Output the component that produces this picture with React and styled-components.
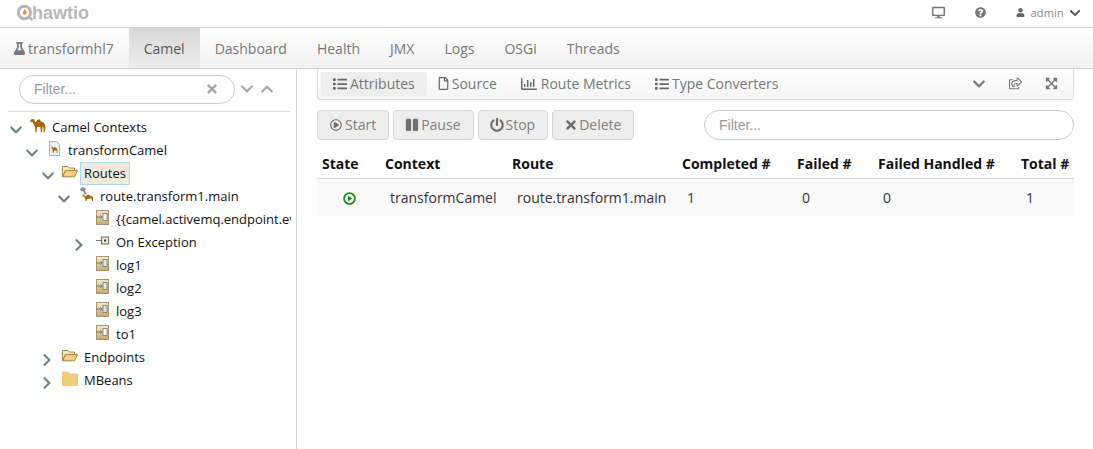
import React from "react";
import styled, { createGlobalStyle } from "styled-components";
import {
  FaChevronDown,
  FaChevronRight,
  FaChevronUp,
  FaDesktop,
  FaExpandArrowsAlt,
  FaFlask,
  FaList,
  FaPause,
  FaPowerOff,
  FaQuestionCircle,
  FaRegChartBar,
  FaRegFile,
  FaRegPlayCircle,
  FaRegShareSquare,
  FaTimes,
  FaUser,
} from "react-icons/fa";

const GlobalStyle = createGlobalStyle`
  html, body {
    margin: 0;
    height: 100%;
    overflow: hidden;
    background: #fff;
    font-family: "Open Sans", "Liberation Sans", sans-serif;
  }
  #root { height: 100%; }
  * { box-sizing: border-box; }
`;

const CamelIcon = () => (
  <svg width="17" height="15" viewBox="0 0 17 15">
    <path
      fill="#a8660f"
      d="M0 2.4 L2 .6 L4.6 .8 L5 3 L6 4 L8 1.4 L10 .8 L11.6 3 L14 4 L16 6.4 L16.4 10 L15.6 14.6 L14.4 14.6 L14.4 10 L13.4 8.6 L12.8 14.6 L11.6 14.6 L11 9 L7.4 9 L7 14.6 L5.8 14.6 L5.2 9 L4 6.6 L3 4 L.8 3.8 Z"
    />
  </svg>
);

const ContextIcon = () => (
  <svg width="13" height="15" viewBox="0 0 13 15">
    <path fill="#eef1f6" stroke="#a9b1c0" d="M1.5 .5 H8.5 L11.5 3.5 V14.5 H1.5 Z" />
    <path fill="#a8660f" d="M3 6 L4.5 5.5 L5 7 L7 6 L9 7.5 L9.6 12 L8.8 12 L8.4 9.5 L6 9.5 L5.6 12 L4.8 12 L4.6 8.5 Z" />
  </svg>
);

const RouteIcon = () => (
  <svg width="15" height="15" viewBox="0 0 15 15">
    <path fill="#8e8e8e" d="M1 2 L4 0 L7 1.5 L6 3.5 L7.5 7 L6 8 L4 4 L2 4.5 Z" />
    <path fill="#a8660f" d="M3 8 L5 7.5 L6 9.5 L9 7.5 L12 9 L14 10 L14 14 L13 14 L12.4 11.5 L8 12 L7.6 14 L6.6 14 L6 11 Z" />
  </svg>
);

const FolderOpenIcon = () => (
  <svg width="16" height="13" viewBox="0 0 16 13">
    <path fill="#f5e6c0" stroke="#a98545" d="M.5 11.5 V1.5 H6 L7.5 3 H12.5 V5.5 H4 Z" />
    <path fill="#f1cf83" stroke="#a98545" d="M.5 11.8 L3.5 5.5 H15.5 L12.5 11.8 Z" />
  </svg>
);

const FolderIcon = () => (
  <svg width="16" height="15" viewBox="0 0 16 15">
    <path fill="#efcc7c" d="M1 .5 H6 L8 2.5 H14.5 Q16 2.5 16 4 V13.5 Q16 15 14.5 15 H1.5 Q0 15 0 13.5 V1.5 Q0 .5 1 .5 Z" />
  </svg>
);

const NodeIcon = ({ dark }) => (
  <svg width="13" height="15" viewBox="0 0 13 15">
    <defs>
      <linearGradient id="nodeFill" x1="0" y1="0" x2="0" y2="1">
        <stop offset="0" stopColor="#f3ead0" />
        <stop offset="1" stopColor="#c2a970" />
      </linearGradient>
    </defs>
    <rect x=".5" y=".5" width="12" height="14" fill="url(#nodeFill)" stroke="#a89668" />
    <rect x="7" y="3.5" width="4" height="7" fill={dark ? "#fff" : "#dbe3ea"} stroke="#777" strokeWidth=".8" />
    <path d="M0 7 H6 M4.4 5.4 L6 7 L4.4 8.6" fill="none" stroke="#777" />
  </svg>
);

const ExceptionIcon = () => (
  <svg width="15" height="9" viewBox="0 0 15 9">
    <path d="M1 4.5 H6" stroke="#777" />
    <rect x="6.5" y="1" width="7" height="7" fill="#f0e8cc" stroke="#6a6a6a" />
    <rect x="9" y="3.5" width="2" height="2" fill="#333" />
  </svg>
);

const LogoMark = () => (
  <svg width="18" height="18" viewBox="0 0 18 18">
    <circle cx="8.5" cy="8.5" r="6.2" fill="none" stroke="#b5b5b5" strokeWidth="3" />
    <path d="M12 12 L16.5 16" stroke="#b5b5b5" strokeWidth="3" />
    <path fill="#ef8f42" d="M8.6 4.8 C10.8 7 11 8.4 10.4 9.8 C9.8 11 7.6 11.2 6.8 10 C6 8.8 7 8 7.6 7.4 C8.2 6.8 8.8 6 8.6 4.8 Z" />
  </svg>
);

const RunningIcon = () => (
  <svg width="13" height="13" viewBox="0 0 13 13">
    <circle cx="6.5" cy="6.5" r="5.4" fill="none" stroke="#1a8a1a" strokeWidth="1.8" />
    <path fill="#1a8a1a" d="M5 3.7 L9.4 6.5 L5 9.3 Z" />
  </svg>
);

const treeRows = [
  { level: 0, open: true, icon: <CamelIcon />, label: "Camel Contexts" },
  { level: 1, open: true, icon: <ContextIcon />, label: "transformCamel" },
  { level: 2, open: true, icon: <FolderOpenIcon />, label: "Routes", selected: true },
  { level: 3, open: true, icon: <RouteIcon />, label: "route.transform1.main" },
  { level: 4, icon: <NodeIcon dark />, label: "{{camel.activemq.endpoint.everything}}" },
  { level: 4, open: false, icon: <ExceptionIcon />, label: "On Exception" },
  { level: 4, icon: <NodeIcon />, label: "log1" },
  { level: 4, icon: <NodeIcon />, label: "log2" },
  { level: 4, icon: <NodeIcon />, label: "log3" },
  { level: 4, icon: <NodeIcon dark />, label: "to1" },
  { level: 2, open: false, icon: <FolderOpenIcon />, label: "Endpoints" },
  { level: 2, open: false, icon: <FolderIcon />, label: "MBeans" },
];

const navItems = ["Dashboard", "Health", "JMX", "Logs", "OSGi", "Threads"];

const columns = [
  { title: "State", width: 63 },
  { title: "Context", width: 127 },
  { title: "Route", width: 170 },
  { title: "Completed #", width: 115 },
  { title: "Failed #", width: 81 },
  { title: "Failed Handled #", width: 143 },
  { title: "Total #", width: 58 },
];

export default function App() {
  return (
    <>
      <GlobalStyle />
      <Page>
        <TopBar>
          <Logo>
            <LogoMark />
            <LogoText>hawtio</LogoText>
          </Logo>
          <TopActions>
            <FaDesktop size={13} />
            <FaQuestionCircle size={11} />
            <UserMenu>
              <FaUser size={9} />
              <span>admin</span>
              <FaChevronDown size={12} color="#555" />
            </UserMenu>
          </TopActions>
        </TopBar>

        <Nav>
          <NavItem>
            <FaFlask size={13} />
            transformhl7
          </NavItem>
          <NavItem $active>Camel</NavItem>
          {navItems.map((item) => (
            <NavItem key={item}>{item}</NavItem>
          ))}
        </Nav>

        <Main>
          <Sidebar>
            <FilterRow>
              <SideFilter>
                <FilterText>Filter...</FilterText>
                <ClearIcon size={14} />
              </SideFilter>
              <FaChevronDown size={14} color="#a9a9a9" />
              <FaChevronUp size={14} color="#a9a9a9" />
            </FilterRow>
            <Tree>
              {treeRows.map((row) => (
                <TreeRow key={row.label} $level={row.level}>
                  <Toggle $closed={row.open === false}>
                    {row.open === true && <FaChevronDown size={14} />}
                    {row.open === false && <FaChevronRight size={14} />}
                  </Toggle>
                  <TreeIcon>{row.icon}</TreeIcon>
                  <TreeLabel $selected={row.selected}>{row.label}</TreeLabel>
                </TreeRow>
              ))}
            </Tree>
          </Sidebar>

          <Content>
            <Toolbar>
              <Tab $active>
                <FaList size={14} />
                Attributes
              </Tab>
              <Tab>
                <FileIcon size={13} />
                Source
              </Tab>
              <Tab $wide>
                <FaRegChartBar size={16} />
                Route Metrics
              </Tab>
              <Tab>
                <FaList size={14} />
                Type Converters
              </Tab>
              <ToolbarIcons>
                <FaChevronDown size={14} />
                <FaRegShareSquare size={13} />
                <FaExpandArrowsAlt size={13} />
              </ToolbarIcons>
            </Toolbar>

            <Actions>
              <ActionButton>
                <FaRegPlayCircle size={12} />
                Start
              </ActionButton>
              <ActionButton>
                <WideIcon as={FaPause} size={14} />
                Pause
              </ActionButton>
              <ActionButton>
                <WideIcon as={FaPowerOff} size={14} />
                Stop
              </ActionButton>
              <ActionButton>
                <DeleteIcon size={14} />
                Delete
              </ActionButton>
              <ContentFilter>Filter...</ContentFilter>
            </Actions>

            <Table>
              <colgroup>
                {columns.map((col) => (
                  <col key={col.title} width={col.width} />
                ))}
              </colgroup>
              <thead>
                <tr>
                  {columns.map((col) => (
                    <Th key={col.title}>{col.title}</Th>
                  ))}
                </tr>
              </thead>
              <tbody>
                <Row>
                  <StateCell>
                    <RunningIcon />
                  </StateCell>
                  <Td>transformCamel</Td>
                  <Td>route.transform1.main</Td>
                  <Td>1</Td>
                  <Td>0</Td>
                  <Td>0</Td>
                  <Td>1</Td>
                </Row>
              </tbody>
            </Table>
          </Content>
        </Main>
      </Page>
    </>
  );
}

const Page = styled.div`
  height: 100%;
  display: flex;
  flex-direction: column;
`;

const TopBar = styled.div`
  height: 28px;
  flex: none;
  display: flex;
  align-items: center;
  justify-content: space-between;
  padding: 0 12px 2px 16px;
  background: #fff;
  border-bottom: 1px solid #d4d4d4;
`;

const Logo = styled.div`
  display: flex;
  align-items: center;
`;

const LogoText = styled.span`
  font-family: "Liberation Sans", Arial, sans-serif;
  font-weight: bold;
  font-size: 18px;
  line-height: 18px;
  color: #b8b8b8;
  margin-left: -2px;
`;

const TopActions = styled.div`
  display: flex;
  align-items: center;
  gap: 30px;
  color: #777;
`;

const UserMenu = styled.div`
  display: flex;
  align-items: center;
  gap: 5px;
  font-size: 11px;
  letter-spacing: 0.2px;
  color: #888;

  svg:first-child {
    color: #666;
  }
`;

const Nav = styled.div`
  height: 41px;
  flex: none;
  display: flex;
  background: linear-gradient(#fff, #f1f1f1);
  border-bottom: 1px solid #d4d4d4;
`;

const NavItem = styled.div`
  display: flex;
  align-items: center;
  gap: 2px;
  padding: 0 15px;
  font-size: 14px;
  color: ${(p) => (p.$active ? "#555" : "#777")};
  background: ${(p) => (p.$active ? "linear-gradient(#d8d8d8, #ececec)" : "none")};

  &:first-child {
    padding-left: 13px;
  }
`;

const Main = styled.div`
  flex: 1;
  min-height: 0;
  display: flex;
`;

const Sidebar = styled.div`
  width: 297px;
  flex: none;
  border-right: 1px solid #d4d4d4;
`;

const FilterRow = styled.div`
  height: 43px;
  margin: 0 6px 0 8px;
  padding: 0 0 2px 11px;
  display: flex;
  align-items: center;
  gap: 5px;
  border-bottom: 1px solid #ddd;

  svg + svg {
    margin-left: 1px;
  }
`;

const SideFilter = styled.div`
  width: 216px;
  height: 29px;
  padding: 0 15px 0 14px;
  display: flex;
  align-items: center;
  justify-content: space-between;
  border: 1px solid #ccc;
  border-radius: 15px;
  background: #fff;
`;

const FilterText = styled.span`
  font-family: "Liberation Sans", Arial, sans-serif;
  font-size: 14px;
  color: #999;
`;

const ClearIcon = styled(FaTimes)`
  color: #aaa;
`;

const Tree = styled.div`
  padding: 4px 5px 0 0;
`;

const TreeRow = styled.div`
  height: 23px;
  display: flex;
  align-items: center;
  padding-left: ${(p) => 8 + p.$level * 16}px;
  white-space: nowrap;
  overflow: hidden;
`;

const Toggle = styled.span`
  width: 16px;
  flex: none;
  display: flex;
  justify-content: center;
  color: #6d8785;
  margin-top: 4px;
  transform: translateX(${(p) => (p.$closed ? -1 : 0)}px);
`;

const TreeIcon = styled.span`
  width: 16px;
  flex: none;
  margin-left: 6px;
  display: flex;
  justify-content: center;
  margin-top: -4px;
`;

const TreeLabel = styled.span`
  margin-left: 2px;
  padding: 1px 3px 2px;
  font-size: 13px;
  line-height: 18px;
  color: #111;
  border: 1px solid ${(p) => (p.$selected ? "#a6dcf0" : "transparent")};
  background: ${(p) => (p.$selected ? "#eeebdd" : "none")};
`;

const Content = styled.div`
  flex: 1;
  min-width: 0;
  padding: 0 19px 0 20px;
`;

const Toolbar = styled.div`
  height: 31px;
  display: flex;
  align-items: center;
  padding: 0 5px 1px 3px;
  border: 1px solid #ddd;
  border-top: none;
  border-radius: 0 0 4px 4px;
  background: linear-gradient(#fff, #f5f5f5);
  box-shadow: 0 1px 3px rgba(0, 0, 0, 0.04);
`;

const Tab = styled.div`
  height: 24px;
  display: flex;
  align-items: center;
  gap: ${(p) => (p.$wide ? 4 : 3)}px;
  padding: 0 12px;
  font-size: 14px;
  color: #777;
  border-radius: 2px;
  background: ${(p) => (p.$active ? "#eeeeee" : "none")};

  svg {
    color: #666;
  }
`;

const FileIcon = styled(FaRegFile)`
  margin: 0 -1.5px;
`;

const ToolbarIcons = styled.div`
  margin-left: auto;
  display: flex;
  align-items: center;
  gap: 23px;
  padding-right: 10px;
  color: #777;
`;

const Actions = styled.div`
  margin-top: 10px;
  display: flex;
  align-items: center;
  gap: 4px;
`;

const ActionButton = styled.div`
  height: 30px;
  display: flex;
  align-items: center;
  gap: 3px;
  padding: 0 12px 2px;
  font-size: 14px;
  color: #808080;
  background: #eeeeee;
  border: 1px solid #d6d6d6;
  border-radius: 4px;

  svg {
    color: #707070;
    margin-top: 2px;
  }
`;

const WideIcon = styled.svg`
  margin: 0 -1px;
`;

const DeleteIcon = styled(FaTimes)`
  margin: 0 -1.5px;
`;

const ContentFilter = styled.div`
  width: 370px;
  height: 30px;
  margin-left: auto;
  padding-left: 14px;
  display: flex;
  align-items: center;
  font-family: "Liberation Sans", Arial, sans-serif;
  font-size: 14px;
  color: #999;
  background: #fff;
  border: 1px solid #ccc;
  border-radius: 15px;
`;

const Table = styled.table`
  width: 100%;
  margin-top: 10px;
  table-layout: fixed;
  border-collapse: collapse;
  font-size: 14px;
`;

const Th = styled.th`
  height: 28px;
  padding: 0 5px;
  text-align: left;
  font-weight: 700;
  color: #111;
  white-space: nowrap;
  border-bottom: 1px solid #ddd;
`;

const Row = styled.tr`
  background: #f9f9f9;
`;

const Td = styled.td`
  height: 38px;
  padding: 1px 10px 0;
  color: #333;
  white-space: nowrap;
`;

const StateCell = styled(Td)`
  padding: 4px 0 0 26px;
`;
